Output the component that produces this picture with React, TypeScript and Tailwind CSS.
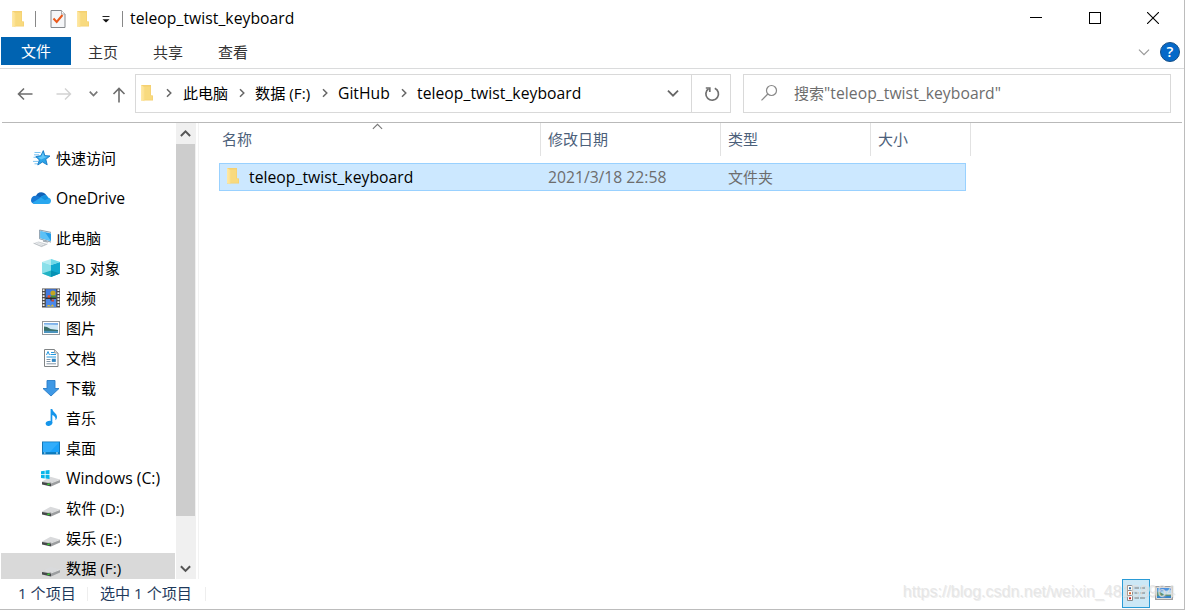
import type { ReactNode } from "react";

function Folder() {
  return (
    <svg width="14" height="18" viewBox="0 0 14 18" className="shrink-0">
      <defs>
        <linearGradient id="fold" x1="0" x2="1">
          <stop offset="0" stopColor="#ffe9a6" />
          <stop offset="1" stopColor="#fbdf8c" />
        </linearGradient>
      </defs>
      <path d="M1 1h10v10.5h2v5H1z" fill="#f5d071" />
      <path d="M4 2.5h6.3v9h2v4.3H4z" fill="#f8da7f" />
      <path d="M1 1l3.4 2v14.2L1 16z" fill="url(#fold)" />
    </svg>
  );
}

function Chevron({ dir, size = 10, color = "#666", width = 1.5 }: { dir: "right" | "down" | "up"; size?: number; color?: string; width?: number }) {
  const d = dir === "right" ? "M3 1.2L6.8 5L3 8.8" : dir === "down" ? "M0.8 3L5 7.2L9.2 3" : "M0.8 7.2L5 3L9.2 7.2";
  return (
    <svg width={size} height={size} viewBox="0 0 10 10" className="shrink-0" fill="none" stroke={color} strokeWidth={(width * 10) / size}>
      <path d={d} />
    </svg>
  );
}

function Icon({ children }: { children: ReactNode }) {
  return (
    <svg width="20" height="20" viewBox="0 0 20 20" className="shrink-0">
      {children}
    </svg>
  );
}

const drive = (
  <>
    <path d="M1 13.5L9.5 8.8L19 11.6L10 17z" fill="#d9dadc" />
    <path d="M1 13.5L10 14.6V18.4L1 16.4z" fill="#45484a" />
    <path d="M10 14.6L19 11.6V14.4L10 18.4z" fill="#9c9ea0" />
    <path d="M1 13.5L10 15L19 11.6" stroke="#eeeeee" strokeWidth=".8" fill="none" />
    <rect x="6.4" y="15.6" width="2.2" height="1.5" fill="#38d430" />
  </>
);

const icons: Record<string, ReactNode> = {
  star: (
    <>
      <path d="M3.5 4.5h6M3 6.8h5M2.5 9.3h5M2 13.4h5M3.5 15.8h4" stroke="#7cc4f2" strokeWidth="1" />
      <path d="M12.3 2.6L13.8 7.6L19 8L14.8 11.3L16.2 16.8L11.4 14L6.8 17L8.3 11.9L4.8 8.6L9.9 7.7z" fill="#2ba4e8" stroke="#1679c4" strokeWidth=".9" />
      <path d="M12 4.6L13.2 8.3L16.5 8.7L10 11.5L7 9.2L10.4 8.5z" fill="#62c6f8" />
    </>
  ),
  cloud: (
    <>
      <path d="M4.5 9.2C5.5 4 12 2 15.6 7.5L12 13H4z" fill="#0f62b8" />
      <path d="M0 12.4c0-3 2-4.8 5-4.6c2 0 3 1 5 2l-5 6C2 15.9 0 14.8 0 12.4z" fill="#1678d4" />
      <path d="M9 10C11 6.8 16 6.4 17 9.4C19 9.8 20 11.2 20 12.8C20 14.8 18.7 16.1 17 16.1H4.5C3.2 16.1 2 15.6 1.4 14.8z" fill="#29a7ef" />
      <path d="M10 9.5C12 6.8 15.8 6.6 17 9.4L17.5 10.2L14 12.3z" fill="#1490df" />
    </>
  ),
  pc: (
    <>
      <path d="M8.6 2L21 4.6V14.4L8.6 10.8z" fill="#dcebf2" stroke="#74899a" strokeWidth=".8" />
      <path d="M9.5 3.3L20 5.5V13L9.5 10z" fill="#249ce8" />
      <path d="M9.5 3.3L14 4.2L20 13L9.5 10z" fill="#5cc1f6" />
      <path d="M12 12L16 13.1L17.5 14.8L12 13.8z" fill="#a4aeb6" />
      <path d="M2.5 15.2L7.5 13.4L16.5 16L10.5 18.8z" fill="#cfd3d7" />
      <path d="M4.6 15.3L10.5 17.4M6.4 14.6L13 16.8" stroke="#f1f3f4" strokeWidth=".8" />
      <path d="M2.5 15.2L10.5 18.6L16.5 16" stroke="#a8afb4" strokeWidth=".6" fill="none" />
    </>
  ),
  cube: (
    <>
      <path d="M1 4L10 1L19 4L10 7z" fill="#b4edf3" />
      <path d="M1 4L10 7V19L1 15.4z" fill="#8ae0ea" />
      <path d="M10 7L19 4V15.4L10 19z" fill="#12a9cf" />
      <path d="M1 15.4L10 12.5V19z" fill="#22b3c4" />
      <path d="M10 12.5L19 15.4L10 19z" fill="#0792b4" />
      <path d="M10 1V7L19 4z" fill="#6fd9e8" />
    </>
  ),
  film: (
    <>
      <rect x="1" y=".5" width="18" height="19" fill="#4d4a48" />
      <path d="M2.6 1.2v18M17.4 1.2v18" stroke="#f2f2f2" strokeWidth="1.9" strokeDasharray="1.7 1.3" />
      <rect x="4.8" y="1.2" width="10.4" height="8.4" fill="#4079e0" />
      <rect x="4.8" y="10.8" width="10.4" height="8.3" fill="#4c88e9" />
      <circle cx="12" cy="5" r="2.6" fill="#c3a522" />
      <circle cx="8" cy="8.4" r="1.5" fill="#e4502e" />
      <path d="M10 7.6h5v2h-5z" fill="#4b922c" />
      <path d="M10.4 11.5h2.5v2h-2.5z" fill="#d2482e" />
      <path d="M6 18.6l.7-1.6h1.6l1.5 1.2l1.6-2l1.8 2.4z" fill="#e4ba28" />
      <path d="M5 10.2h10M10 9.5v3" stroke="#28221e" strokeWidth="1.1" />
    </>
  ),
  picture: (
    <>
      <rect x="1.5" y="3.5" width="17" height="13" fill="#fff" stroke="#96999c" />
      <rect x="3" y="5" width="14" height="10" fill="#cfe8f8" />
      <path d="M3 5h14v2L3 6.5z" fill="#7db1ea" />
      <path d="M3 12h14v3H3z" fill="#4c94bd" />
      <path d="M3 8.5L6 9L9.5 11L17 12V13L3 12.8z" fill="#3a6f68" />
    </>
  ),
  doc: (
    <>
      <path d="M3.5 1.5H13.5L17 5V18.5H3.5z" fill="#fff" stroke="#808486" />
      <path d="M13.5 1.5V5H17" fill="#ddd" stroke="#909496" strokeWidth=".8" />
      <path d="M5.5 7L7 3.5L8.5 7M10 4.5h3M9.5 6.5h5.5M5.5 9h9.5" stroke="#2498df" strokeWidth="1" fill="none" />
      <path d="M5.5 11.5h4M5.5 13.5h4M5.5 15.8h9.5" stroke="#8295a6" />
      <rect x="10.8" y="10.7" width="4" height="3.2" fill="#3286c1" />
    </>
  ),
  download: <path d="M6 2.5h8v8h4L10 18L2 10.5h4z" fill="#3e98e5" stroke="#287cc7" strokeWidth=".9" />,
  music: (
    <>
      <path d="M9.6 1h1.7c.3 3 4.8 4.5 4.7 7.8c0 1.4-.5 2.5-1.5 3.4c.5-2.6-1-4.2-3.2-5.1V15H9.6z" fill="#1595ea" />
      <ellipse cx="8" cy="15.3" rx="3.4" ry="2.5" fill="#1595ea" transform="rotate(-16 8 15.3)" />
    </>
  ),
  desktop: (
    <>
      <rect x="1.5" y="4" width="17" height="12" fill="#1ba2fa" stroke="#1478b8" />
      <path d="M18 4.5L8 15H2V4.5z" fill="#32adfb" />
      <path d="M2 15h16" stroke="#0873b0" strokeWidth="1.5" />
      <path d="M3 15h1.5M15 15h2" stroke="#d7f1ff" strokeWidth="1" />
    </>
  ),
  windows: (
    <>
      {drive}
      <path d="M0 3.2L3.7 2.7V6.2H0zM4.5 2.5L8.5 2V6.2h-4zM0 7h3.7v3.5L0 10zM4.5 7h4v4.1l-4-.5z" fill="#08b5e9" />
    </>
  ),
  drive,
};

const nav: { icon: string; label: string; top?: boolean; size: string }[] = [
  { icon: "star", label: "快速访问", top: true, size: "text-[15px]" },
  { icon: "cloud", label: "OneDrive", top: true, size: "text-[15.7px]" },
  { icon: "pc", label: "此电脑", top: true, size: "text-[15px]" },
  { icon: "cube", label: "3D 对象", size: "text-[15.2px]" },
  { icon: "film", label: "视频", size: "text-[15px]" },
  { icon: "picture", label: "图片", size: "text-[15px]" },
  { icon: "doc", label: "文档", size: "text-[15px]" },
  { icon: "download", label: "下载", size: "text-[15px]" },
  { icon: "music", label: "音乐", size: "text-[15px]" },
  { icon: "desktop", label: "桌面", size: "text-[15px]" },
  { icon: "windows", label: "Windows (C:)", size: "text-[15.7px]" },
  { icon: "drive", label: "软件 (D:)", size: "text-[15.2px]" },
  { icon: "drive", label: "娱乐 (E:)", size: "text-[15.2px]" },
  { icon: "drive", label: "数据 (F:)", size: "text-[15.2px]" },
];

function TitleBar() {
  return (
    <header className="flex h-[37px] items-center pl-[11px]">
      <Folder />
      <span className="ml-[10px] h-4 w-px bg-[#888]" />
      <svg width="16" height="20" viewBox="0 0 16 20" className="ml-[14px]">
        <path d="M1 1.5h10.5L15 5v13.5H1z" fill="#f5f6f8" stroke="#85888c" />
        <path d="M11.5 1.5V5H15" fill="#fff" stroke="#999" strokeWidth=".8" />
        <path d="M3.5 9.5L6.7 13L12.5 6" fill="none" stroke="#ea5a1c" strokeWidth="2" />
      </svg>
      <div className="ml-[10px]"><Folder /></div>
      <svg width="8" height="10" viewBox="0 0 8 10" className="ml-[12px] mt-[2px]">
        <path d="M.5 1.5h7" stroke="#222" />
        <path d="M.5 4.2h7L4 7.5z" fill="#111" />
      </svg>
      <span className="ml-[12px] h-4 w-px bg-[#888]" />
      <h1 className="ml-[7px] pb-[2px] text-[15.7px] tracking-[0.05px]">teleop_twist_keyboard</h1>
      <div className="ml-auto mr-[25px] flex items-center gap-[46px] pb-[2px]">
        <svg width="13" height="12" shapeRendering="crispEdges"><path d="M0 5.5h12" stroke="#000" /></svg>
        <svg width="12" height="12" shapeRendering="crispEdges"><rect x=".5" y=".5" width="11" height="11" fill="none" stroke="#000" /></svg>
        <svg width="12" height="12"><path d="M0 0L12 12M12 0L0 12" stroke="#000" strokeWidth="1.1" /></svg>
      </div>
    </header>
  );
}

function Ribbon() {
  return (
    <nav className="flex h-[32px] items-start border-b border-[#dadbdc] pl-px text-[15px] text-[#333]">
      <div className="flex h-[28px] w-[70px] items-center justify-center bg-[#0063b1] text-white">文件</div>
      <div className="ml-[17px] flex h-[30px] items-center gap-[35px]">
        <span>主页</span>
        <span>共享</span>
        <span>查看</span>
      </div>
      <div className="ml-auto mr-[4px] flex h-[30px] items-center gap-[10px]">
        <Chevron dir="down" size={12} color="#999" width={1.2} />
        <svg width="20" height="20" viewBox="0 0 20 20">
          <circle cx="10" cy="10" r="9.5" fill="#0569c9" stroke="#174f86" />
          <text x="10" y="15.3" textAnchor="middle" fontSize="15" fontWeight="600" fill="#fff" fontFamily="Open Sans, sans-serif">?</text>
        </svg>
      </div>
    </nav>
  );
}

function AddressBar() {
  return (
    <div className="flex h-[54px] items-start border-b border-[#b9b9b9] pt-[5px] text-[15px]">
      <div className="flex h-[39px] w-[133px] items-center pl-[15px]">
        <svg width="16" height="14" viewBox="0 0 16 14" fill="none" stroke="#6d6d6d" strokeWidth="1.6"><path d="M15.5 7H1.5M7 1.5L1.5 7L7 12.5" /></svg>
        <svg width="16" height="14" viewBox="0 0 16 14" className="ml-[23px]" fill="none" stroke="#d2d2d2" strokeWidth="1.4"><path d="M.5 7h14M9 1.5L14.5 7L9 12.5" /></svg>
        <span className="ml-[17px]"><Chevron dir="down" size={9} color="#777" width={1.7} /></span>
        <svg width="14" height="16" viewBox="0 0 14 16" className="ml-[14px] mt-[2px]" fill="none" stroke="#6d6d6d" strokeWidth="1.6"><path d="M7 15.5V1.5M1.5 7L7 1.5L12.5 7" /></svg>
      </div>
      <div className="flex h-[39px] w-[596px] border border-[#d9d9d9]">
        <div className="flex flex-1 items-center pb-[2px] pl-[4px]">
          <Folder />
          <span className="ml-[10px]"><Chevron dir="right" /></span>
          <span className="ml-[9px] w-[54px] whitespace-nowrap">此电脑</span>
          <Chevron dir="right" />
          <span className="ml-[8px] w-[65px] whitespace-nowrap text-[15.2px]">数据 (F:)</span>
          <Chevron dir="right" />
          <span className="ml-[8px] w-[61px] whitespace-nowrap text-[15.7px]">GitHub</span>
          <Chevron dir="right" />
          <span className="ml-[8px] text-[15.7px] tracking-[0.05px]">teleop_twist_keyboard</span>
          <span className="ml-auto mr-[12px]"><Chevron dir="down" size={12} color="#666" width={1.8} /></span>
        </div>
        <div className="flex w-[39px] items-center justify-center border-l border-[#d9d9d9] pl-[2px]">
          <svg width="16" height="16" viewBox="0 0 16 16" fill="none" stroke="#707070" strokeWidth="1.7">
            <path d="M10.8 2.2A6.3 6.3 0 1 1 4.5 2.8" />
            <path d="M1.8 2H5.8V6" />
          </svg>
        </div>
      </div>
      <div className="ml-[12px] flex h-[39px] w-[428px] items-center border border-[#d9d9d9] pb-[2px] pl-[16px] text-[#6d6d6d]">
        <svg width="18" height="18" viewBox="0 0 18 18" fill="none" stroke="#888" strokeWidth="1.2">
          <circle cx="11.5" cy="6.5" r="5" />
          <path d="M7.8 10L1.5 16.3" />
        </svg>
        <span className="ml-[16px]">搜索<span className="text-[15.7px] tracking-[0.05px]">"teleop_twist_keyboard"</span></span>
      </div>
    </div>
  );
}

function Sidebar() {
  return (
    <aside className="flex w-[197px] border-r border-[#f2f2f2]">
      <ul className="-ml-px h-[456px] w-[174px] overflow-hidden pt-[20px]">
        {nav.map((n, i) => (
          <li
            key={n.label}
            className={`flex h-[30px] items-center ${n.top ? "pl-[30px]" : "pl-[40px]"} ${i === 1 || i === 2 ? "mt-[10px]" : ""} ${i === nav.length - 1 ? "bg-[#d9d9d9]" : ""}`}
          >
            <Icon>{icons[n.icon]}</Icon>
            <span className={`ml-[5px] whitespace-nowrap ${n.size}`}>{n.label}</span>
          </li>
        ))}
      </ul>
      <div className="ml-px flex h-[456px] w-[20px] flex-col items-center bg-[#f0f0f0] pr-px">
        <div className="flex h-[21px] items-center"><Chevron dir="up" size={11} color="#555" width={2} /></div>
        <div className="h-[372px] w-[19px] bg-[#cdcdcd]" />
        <div className="mt-auto flex h-[21px] items-center"><Chevron dir="down" size={11} color="#555" width={2} /></div>
      </div>
    </aside>
  );
}

function FileList() {
  return (
    <main className="flex-1 text-[15px]">
      <div className="flex h-[33px] items-center text-[#4c607a]">
        <div className="relative flex h-full w-[342px] items-center border-r border-[#e2e2e2] pb-[2px] pl-[23px]">
          名称
          <span className="absolute left-[173px] top-[-2px]"><Chevron dir="up" size={11} color="#777" width={1.1} /></span>
        </div>
        <div className="flex h-full w-[180px] items-center border-r border-[#e2e2e2] pb-[2px] pl-[7px]">修改日期</div>
        <div className="flex h-full w-[150px] items-center border-r border-[#e2e2e2] pb-[2px] pl-[7px]">类型</div>
        <div className="flex h-full w-[100px] items-center border-r border-[#e2e2e2] pb-[2px] pl-[7px]">大小</div>
      </div>
      <div className="ml-[20px] mt-[7px] flex h-[28px] w-[747px] items-center border border-[#99d1ff] bg-[#cce8ff] pl-[6px] text-[#6d6d6d]">
        <div className="pb-[2px]"><Folder /></div>
        <span className="ml-[9px] w-[299px] text-[15.7px] tracking-[0.05px] text-black">teleop_twist_keyboard</span>
        <span className="w-[180px] text-[15.7px]">2021/3/18 22:58</span>
        <span>文件夹</span>
      </div>
    </main>
  );
}

function StatusBar() {
  return (
    <footer className="relative flex h-[30px] items-center pl-[16px] text-[15.1px] text-[#1e395b]">
      <span className="w-[69px] whitespace-nowrap pb-[2px]">1 个项目</span>
      <span className="h-[14px] w-px bg-[#eee]" />
      <span className="ml-[12px] w-[105px] whitespace-nowrap pb-[2px]">选中 1 个项目</span>
      <span className="h-[14px] w-px bg-[#eee]" />
      <div className="ml-auto mr-[9px] flex items-center gap-[5px] pb-[2px]">
        <div className="flex h-[29px] w-[28px] items-center justify-center border border-[#2a9bd6] bg-[#cce8f6]">
          <svg width="18" height="17" viewBox="0 0 18 17">
            <path d="M.5 .5h5v5h-5zM.5 5.5h5v5h-5zM.5 10.5h5v5h-5z" fill="#fff" stroke="#8b8b8b" />
            <path d="M2 2.2h2v2H2z" fill="#3974a8" />
            <path d="M2 7.2h2v2H2z" fill="#dc642e" />
            <path d="M2 12.2h2v2H2z" fill="#ce2020" />
            <path d="M7.5 3h4.5M13 3h5M7.5 8h4.5M13 8h5M7.5 13h4.5M13 13h5" stroke="#777" strokeWidth="1.1" />
          </svg>
        </div>
        <svg width="18" height="14" viewBox="0 0 18 14">
          <rect x=".7" y=".7" width="16.6" height="12.6" fill="#fff" stroke="#9a9a9a" strokeWidth="1.3" />
          <rect x="2" y="2" width="14" height="10" fill="#b5dcf5" />
          <path d="M2 2h14v2L2 6z" fill="#4a90df" />
          <path d="M2 5.5L5 6L9 8.5H16V10H2z" fill="#5b8f70" />
          <path d="M2 10h14v2H2z" fill="#3684c8" />
        </svg>
      </div>
      <span className="absolute right-[7px] top-[4px] whitespace-nowrap font-['Liberation_Sans',sans-serif] text-[16px] leading-[18px] text-[#e2e2e2]/80 [text-shadow:1px_1px_0_rgba(190,190,190,0.25)]">
        https://blog.csdn.net/weixin_48158964
      </span>
    </footer>
  );
}

export default function App() {
  return (
    <div className="flex h-[610px] w-[1185px] flex-col overflow-hidden border-b border-r border-[#bcbcbc] bg-white font-['Open_Sans','Noto_Sans_CJK_SC',sans-serif] leading-5 text-black">
      <TitleBar />
      <Ribbon />
      <div className="ml-[2px] mr-[2px] flex flex-1 flex-col">
        <AddressBar />
        <div className="flex h-[456px]">
          <Sidebar />
          <FileList />
        </div>
        <StatusBar />
      </div>
    </div>
  );
}
